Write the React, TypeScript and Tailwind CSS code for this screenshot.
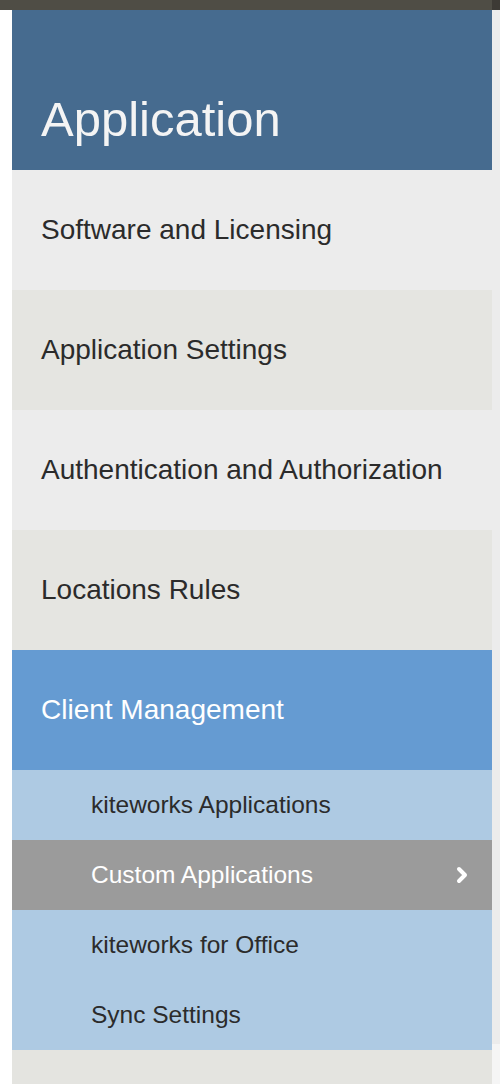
import { ChevronRight } from 'lucide-react'

const mainItems = [
  { label: 'Software and Licensing', bg: 'bg-[#ececec]' },
  { label: 'Application Settings', bg: 'bg-[#e5e5e1]' },
  { label: 'Authentication and Authorization', bg: 'bg-[#ececec]' },
  { label: 'Locations Rules', bg: 'bg-[#e5e5e1]' },
]

const subItems = [
  { label: 'kiteworks Applications', active: false },
  { label: 'Custom Applications', active: true },
  { label: 'kiteworks for Office', active: false },
  { label: 'Sync Settings', active: false },
]

export default function App() {
  return (
    <div
      className="flex h-[1084px] w-[500px] flex-col overflow-hidden bg-white"
      style={{ fontFamily: '"Liberation Sans", Arial, sans-serif' }}
    >
      <div className="flex h-[10px] shrink-0">
        <div className="flex-1 bg-[#4f4d45]" />
        <div className="w-[8px] bg-[#3d3a35]" />
      </div>
      <div className="flex flex-1">
        <div className="w-[12px] bg-white" />
        <nav className="flex w-[480px] flex-col">
          <div className="flex h-[160px] items-end bg-[#466b8f] px-[29px] pb-[26px]">
            <h1 className="text-[49px] leading-none text-[#f4f4f4]">Application</h1>
          </div>
          {mainItems.map((item) => (
            <div
              key={item.label}
              className={`flex h-[120px] items-center px-[29px] text-[28px] text-[#2b2b2b] ${item.bg}`}
            >
              {item.label}
            </div>
          ))}
          <div className="flex h-[120px] items-center bg-[#659bd2] px-[29px] text-[28px] text-white">
            Client Management
          </div>
          {subItems.map((item) => (
            <div
              key={item.label}
              className={`flex h-[70px] items-center justify-between pr-[18px] pl-[79px] text-[24.5px] ${
                item.active ? 'bg-[#9b9b9b] text-white' : 'bg-[#aecae3] text-[#2b2b2b]'
              }`}
            >
              <span>{item.label}</span>
              {item.active && <ChevronRight size={24} strokeWidth={4} className="text-white" />}
            </div>
          ))}
          <div className="flex-1 bg-[#e4e4e0]" />
        </nav>
        <div className="flex w-[8px] flex-col">
          <div className="flex-1 bg-[#ececec]" />
          <div className="h-[40px] bg-[#f5f5f5]" />
        </div>
      </div>
    </div>
  )
}
